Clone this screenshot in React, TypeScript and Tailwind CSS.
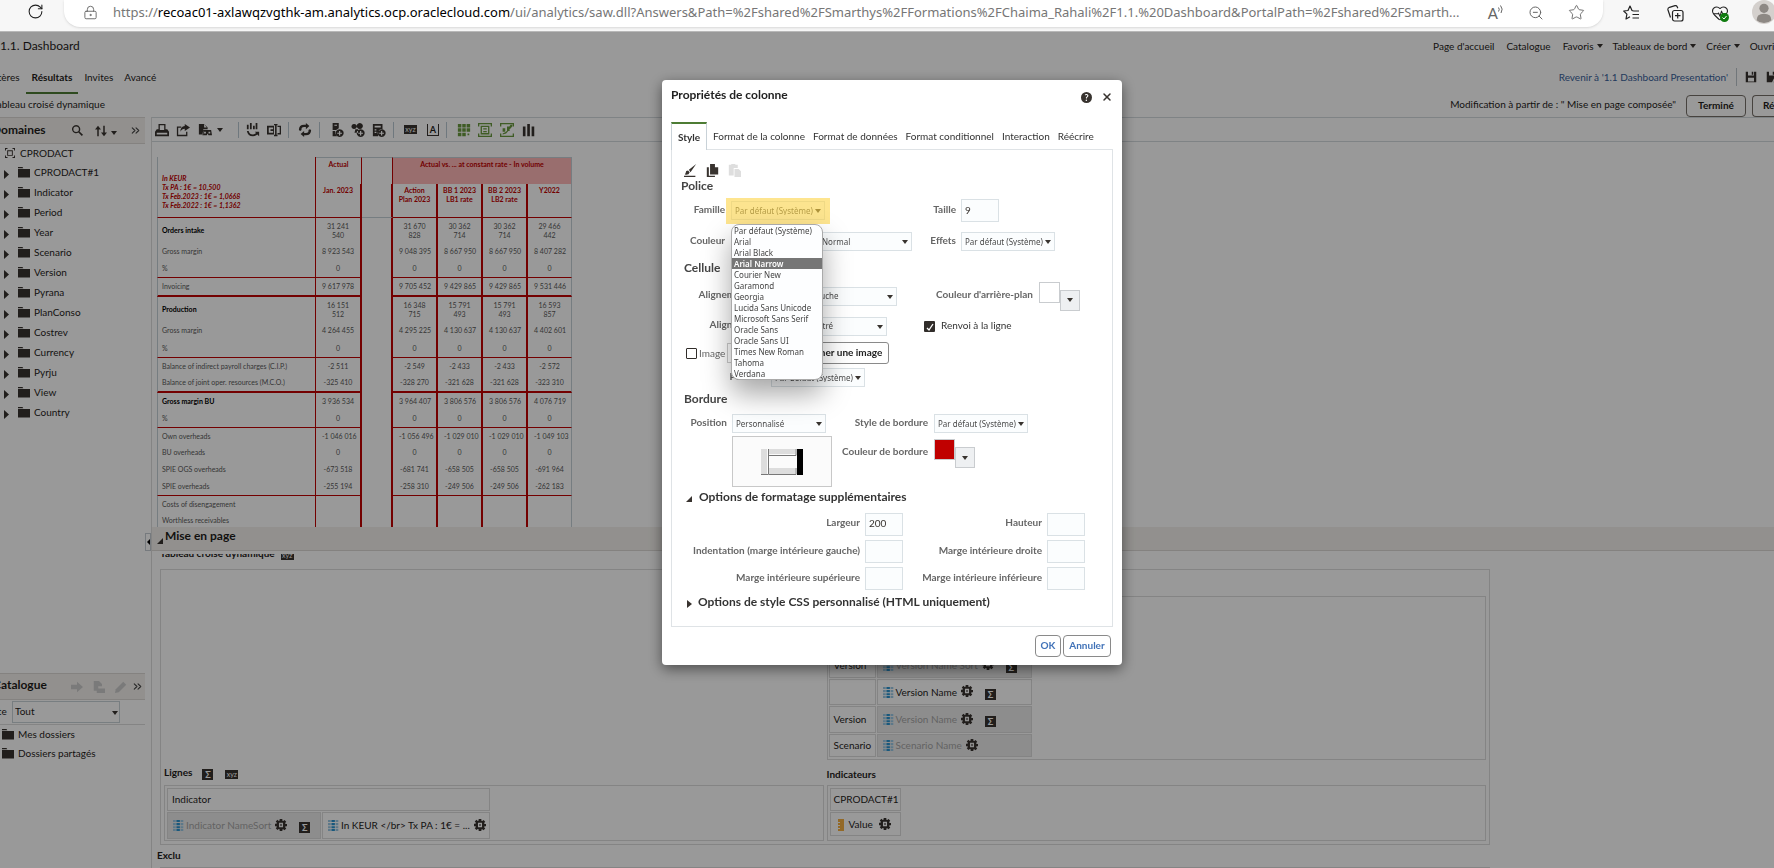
import React from 'react';
import { RotateCw, LockKeyhole, ZoomOut, Star, HeartPulse, ChevronsRight, X } from 'lucide-react';

const INK = '#38332f';

interface IconProps {
    children: React.ReactNode;
    size?: number;
    color?: string;
    className?: string;
}

const Icon: React.FC<IconProps> = ({ children, size = 14, color = INK, className = '' }) => (
    <svg width={size} height={size} viewBox="0 0 16 16" fill={color} stroke="none" className={`shrink-0 ${className}`} aria-hidden="true">
        {children}
    </svg>
);

const Caret = ({ className = '' }: { className?: string }) => (
    <svg width="6" height="4" viewBox="0 0 6 4" fill={INK} className={`shrink-0 ${className}`} aria-hidden="true">
        <path d="M0 0h6L3 4z" />
    </svg>
);

const Folder = () => (
    <svg width="12" height="11" viewBox="0 0 12 11" fill={INK} className="shrink-0" aria-hidden="true">
        <path d="M0 0h4.500l.8 1.300H0zM0 2h12v8.500H0z" />
    </svg>
);

const Gear = () => (
    <Icon size={12}>
        <path
            fillRule="evenodd"
            d="M6.200 0h3.600v2.200l1.200.5 1.700-1.400 2.300 2.300-1.500 1.700.5 1.200H16v3.200h-2l-.5 1.200 1.500 1.700-2.300 2.300-1.700-1.400-1.200.5V16H6.200v-2.200L5 13.300l-1.700 1.400L1 12.400l1.500-1.700L2 9.500H0V6.300h2l.5-1.200L1 3.400l2.300-2.300L5 2.500l1.200-.5zM5.300 5v6h5.400V5zM7 7h2v2H7z"
        />
    </Icon>
);

const Sigma = () => (
    <span className="flex h-[11px] w-[11px] shrink-0 items-center justify-center bg-[#38332f] text-[9px] leading-none font-bold text-white">Σ</span>
);

const Xyz = () => (
    <span className="flex h-[9px] w-[13px] shrink-0 items-center justify-center bg-[#38332f] text-[7px] leading-none text-white">xyz</span>
);

const AttributeIcon = () => (
    <Icon size={11}>
        <path fill="#9cc9e4" d="M0 0h4v3H0zM0 4.500h4v3H0zM0 9h4v3H0zM0 13h4v3H0zM11 0h4v3h-4zM11 4.500h4v3h-4zM11 9h4v3h-4zM11 13h4v3h-4z" />
        <path fill="#2a93cf" d="M5 0h5v3H5zM5 4.500h5v3H5zM5 9h5v3H5zM5 13h5v3H5z" />
    </Icon>
);

const BrowserBar = () => (
    <header className="flex h-8 shrink-0 items-start overflow-hidden border-b border-[#b8b8b8] bg-[#f7f7f7]">
        <button aria-label="Actualiser" className="ml-[27px] pt-[3px] text-[#202020]">
            <RotateCw size={17} strokeWidth={1.500} />
        </button>
        <div className="ml-5 flex h-[27px] min-w-0 flex-1 items-center rounded-b-2xl bg-white pr-[18px] pb-0.5 pl-[19px] shadow-sm">
            <LockKeyhole size={15} strokeWidth={1.500} className="shrink-0 text-[#666]" />
            <a href="#url" className="ml-[15px] min-w-0 flex-1 font-['Noto_Sans',sans-serif] text-[13px] whitespace-nowrap text-[#767676]">
                https://<span className="text-black">recoac01-axlawqzvgthk-am.analytics.ocp.oraclecloud.com</span>
                /ui/analytics/saw.dll?Answers&amp;Path=%2Fshared%2FSmarthys%2FFormations%2FChaima_Rahali%2F1.1.%20Dashboard&amp;PortalPath=%2Fshared%2FSmarth...
            </a>
            <div className="flex shrink-0 items-center gap-6 pl-2 text-[#666]">
                <button aria-label="Lecture à voix haute" className="flex items-start">
                    <span className="text-[15px] leading-4">A</span>
                    <svg width="6" height="9" viewBox="0 0 6 9" fill="none" stroke="currentColor"><path d="M.5 2.500q1.500 2 0 4M2.500.5q3 3.500.5 7.500" /></svg>
                </button>
                <button aria-label="Zoom arrière"><ZoomOut size={16} strokeWidth={1.500} /></button>
                <button aria-label="Ajouter aux favoris"><Star size={17} strokeWidth={1.300} /></button>
            </div>
        </div>
        <div className="flex shrink-0 items-center gap-[27px] pl-5 text-[#222]">
            <button aria-label="Favoris" className="pt-0.5">
                <svg width="17" height="17" viewBox="0 0 17 17" fill="none" stroke="currentColor" strokeWidth="1.200">
                    <path d="M10.500 6 9 5.500 7 1 5 5.500.7 6l3.200 3.200L3 14l4-2.200M10.500 6H16M9.500 9.500H16M9.500 13H16" strokeLinejoin="round" />
                </svg>
            </button>
            <button aria-label="Collections" className="pt-0.5">
                <svg width="17" height="17" viewBox="0 0 17 17" fill="none" stroke="currentColor" strokeWidth="1.200">
                    <rect x="5.500" y="5.500" width="10.500" height="10.500" rx="2" />
                    <path d="M10.700 8v5.500M8 10.700h5.500M3.500 12.500 1 5q-.5-2 1.500-2.700L8 .7q1.500-.4 2.200 1l.6 1.500" />
                </svg>
            </button>
            <button aria-label="Performances" className="relative pt-0.5">
                <HeartPulse size={18} strokeWidth={1.400} />
                <svg width="9" height="9" viewBox="0 0 9 9" className="absolute right-0 bottom-0"><circle cx="4.500" cy="4.500" r="4.500" fill="#107c10" /><path d="m2.500 4.500 1.500 1.500 2.500-3" stroke="white" fill="none" /></svg>
            </button>
            <button aria-label="Profil" className="-mr-0.5 -ml-1">
                <svg width="24" height="24" viewBox="0 0 26 26"><circle cx="13" cy="13" r="13" fill="#d4d0cd" /><circle cx="13" cy="9" r="5" fill="#8d8884" /><path d="M5 22q0-7 8-7t8 7q-3 3-8 3t-8-3" fill="#8d8884" /></svg>
            </button>
        </div>
    </header>
);

const PageHeader = () => (
    <div className="flex h-[85px] shrink-0 justify-between overflow-hidden">
        <div className="shrink-0">
            <h1 className="h-[30px] text-[12px] leading-7">1.1. Dashboard</h1>
            <nav className="-ml-[15px] flex h-8 items-end text-[10px]">
                <a href="#criteres" className="pb-[9px]">Critères</a>
                <a href="#resultats" className="ml-1.5 border-b-2 border-[#4d7c34] px-1.5 pb-[7px] font-bold">Résultats</a>
                <a href="#invites" className="ml-1.5 pb-[9px]">Invites</a>
                <a href="#avance" className="ml-[11px] pb-[9px]">Avancé</a>
            </nav>
            <p className="-ml-2 text-[10px] leading-5">Tableau croisé dynamique</p>
        </div>
        <div className="-mr-1 shrink-0 text-[10px]">
            <nav className="flex h-7 items-center justify-end">
                <a href="#accueil">Page d'accueil</a>
                <a href="#catalogue" className="ml-3">Catalogue</a>
                <button className="ml-3 flex items-center gap-[3px]">Favoris <Caret /></button>
                <button className="ml-2.5 flex items-center gap-[3px]">Tableaux de bord <Caret /></button>
                <button className="ml-2.5 flex items-center gap-[3px]">Créer <Caret /></button>
                <button className="ml-2.5">Ouvrir</button>
            </nav>
            <div className="flex h-[34px] items-center justify-end">
                <a href="#revenir" className="text-[#39629b]">Revenir à '1.1 Dashboard Presentation'</a>
                <span className="ml-2 h-[18px] w-px bg-[#bcc5cc]" />
                <button aria-label="Enregistrer" className="ml-2"><Icon size={12}><path d="M1 1h3v5h8V1h3v14H1zM9 1h2v4H9zM4 9v5h8V9z" fillRule="evenodd" /></Icon></button>
                <button aria-label="Enregistrer sous" className="ml-[9px]"><Icon size={12}><path d="M1 1h3v5h8V1h3l-7 14H1zM9 1h2v4H9zM15 7l-5 8h5z" /></Icon></button>
            </div>
            <div className="flex h-[23px] items-center justify-end">
                <span className="pb-0.5">Modification à partir de : " Mise en page composée"</span>
                <button className="ml-2.5 h-[22px] w-[60px] rounded border border-[#77706a] font-bold">Terminé</button>
                <button className="ml-1.5 h-[22px] w-[26px] overflow-hidden rounded-l border border-r-0 border-[#77706a] pl-2.5 text-left font-bold">Rétablir</button>
            </div>
        </div>
    </div>
);

const folders = ['CPRODACT#1', 'Indicator', 'Period', 'Year', 'Scenario', 'Version', 'Pyrana', 'PlanConso', 'Costrev', 'Currency', 'Pyrju', 'View', 'Country'];

const Sidebar = () => (
    <aside className="flex w-[145px] shrink-0 flex-col overflow-hidden">
        <div className="flex h-[27px] shrink-0 items-center border-y border-[#dcd9d6] bg-[#f4f1ed]">
            <h2 className="-ml-2 w-[60px] pb-0.5 text-[12px] font-bold">Domaines</h2>
            <div className="ml-5 flex items-center">
                <button aria-label="Rechercher"><Icon size={11}><path fillRule="evenodd" d="M6 0a6 6 0 1 0 3.300 11l5 5 1.700-1.700-5-5A6 6 0 0 0 6 0m0 2a4 4 0 1 1 0 8 4 4 0 0 1 0-8" /></Icon></button>
                <button aria-label="Trier" className="ml-3 flex items-center gap-1"><Icon size={12}><path d="M3 15V6H0l4-5 4 5H5v9zM11 1v9H8l4 5 4-5h-3V1z" /></Icon><Caret className="mt-1" /></button>
                <button aria-label="Réduire" className="ml-3"><ChevronsRight size={13} color="#444" /></button>
            </div>
        </div>
        <div className="min-h-0 flex-1 overflow-hidden text-[10px]">
            <div className="flex h-[18px] items-center">
                <Icon size={10} className="ml-[5px]"><path fillRule="evenodd" d="M0 0h4v1.500H1.500V4H0zM12 0h4v4h-1.500V1.500H12zM0 12h1.500v2.500H4V16H0zM14.500 12H16v4h-4v-1.500h2.500zM3.500 3.500h9v9h-9zM5 5v6h6V5z" /></Icon>
                <span className="ml-[5px]">CPRODACT</span>
            </div>
            <ul>
                {folders.map((name) => (
                    <li key={name}>
                        <button className="flex h-5 items-center">
                            <svg width="5" height="9" viewBox="0 0 5 9" fill={INK} className="mt-1 ml-1"><path d="M0 0l5 4.500L0 9z" /></svg>
                            <span className="ml-[9px]"><Folder /></span>
                            <span className="ml-1">{name}</span>
                        </button>
                    </li>
                ))}
            </ul>
        </div>
        <div className="h-[195px] shrink-0 text-[10px]">
            <div className="flex h-[27px] items-center border-y border-[#dcd9d6] bg-[#f4f1ed]">
                <h2 className="-ml-[7px] w-[78px] pb-1 text-[12px] font-bold">Catalogue</h2>
                <div className="flex items-center gap-2.5">
                    <Icon size={12} color="#ccc"><path d="M0 5h8V1l8 7-8 7v-4H0z" /></Icon>
                    <Icon size={12} color="#ccc"><path d="M1 0h7l4 4v3H7v6H1zM7 10h9v6H5v-4z" /></Icon>
                    <Icon size={12} color="#ccc"><path d="m0 16 1-5L11 1l4 4L5 15z" /></Icon>
                </div>
                <button aria-label="Réduire le catalogue" className="ml-1"><ChevronsRight size={13} color="#444" /></button>
            </div>
            <div className="flex h-[25px] items-center border-b border-[#dcdcdc]">
                <label htmlFor="liste" className="-ml-3.5 w-[26px] pb-0.5">Liste</label>
                <div className="relative">
                    <select id="liste" className="h-[22px] w-[108px] appearance-none border border-[#c9d2d8] px-0.5 pt-0 pb-0.5 text-[10px]">
                        <option>Tout</option>
                    </select>
                    <Caret className="absolute top-[10px] right-0.5" />
                </div>
            </div>
            <a href="#mes" className="flex h-[18px] items-center gap-1 pl-0.5"><Folder />Mes dossiers</a>
            <a href="#partages" className="flex h-5 items-center gap-1 pl-0.5"><Folder />Dossiers partagés</a>
        </div>
    </aside>
);

const Separator = () => <span className="h-4 w-px bg-[#b9c8d3]" />;

const Toolbar = () => (
    <div className="flex h-[25px] shrink-0 items-center gap-[7px] border-y border-[#d4dade] pl-[3px]">
        <button aria-label="Imprimer"><Icon><path fillRule="evenodd" d="M4 1h8v6h2l2 3v5H0v-5l2-3h2zM5.500 2.500V8h5V2.500zM2 11v2h12v-2z" /></Icon></button>
        <button aria-label="Exporter"><Icon><path d="M1 4h5v1.500H2.500v8h9V10H13v5H1zM10 1l6 4-6 4V6.500Q6.500 6.500 5 10q0-6 5-6.500z" /></Icon></button>
        <button aria-label="Aperçu" className="ml-px flex items-center gap-[5px]"><Icon><path fillRule="evenodd" d="M1 1h6l4 4v2H6v6H1zM7 1v4h3zM6 8h9l1 6h-4l-1-2-1 2H5zM7 10v2h2v-2zm5 0v2h2v-2z" /></Icon><Caret /></button>
        <span className="w-px" />
        <Separator />
        <button aria-label="Permuter"><Icon><path d="M1 2h2v5H1zM4.500 0h2v7h-2zM8 3h2v4H8zM11 0h2v7h-2zM1 9h2q1 4 5 4 2 0 3.500-1.500L10 10h5v5l-2-2q-2 2-5 2-6 0-7-6" /></Icon></button>
        <button aria-label="Renommer"><Icon><path fillRule="evenodd" d="M0 3h8v10H0zM2 5v6h5V9H4V7h3V5zM8 1h4v1.500h-1v11h1V15H8v-1.500h1.200v-11H8zM12 3h4v10h-4v-1.500h2.500v-7H12z" /></Icon></button>
        <Separator />
        <button aria-label="Actualiser les résultats" className="ml-0.5"><Icon><path d="M1 8q0-6 6-6h2V0l4 3.500L9 7V4.500H7Q3.500 4.500 4 8l-1.500 1zM15 8q0 6-6 6H7v2l-4-3.500L7 9v2.500h2q3.500 0 3-3.500l1.500-1z" /></Icon></button>
        <Separator />
        <button aria-label="Nouveau groupe" className="ml-[3px]"><Icon><path fillRule="evenodd" d="M3 0h7v6L7 8H3zM5 2v1h3V2zM3 9h3v3l2 3H3zM11 7a4.500 4.500 0 1 0 .1 0M10.300 9h1.400v2h2v1.400h-2v2h-1.400v-2h-2V11h2z" /></Icon></button>
        <button aria-label="Nouvel élément"><Icon><path fillRule="evenodd" d="M3.500 1a3 3 0 1 0 .1 0M10 0a3.500 3.500 0 1 0 .1 0M5 7h3v4H4zM11 7a4.500 4.500 0 1 0 .1 0M10.300 9h1.400v2h2v1.400h-2v2h-1.400v-2h-2V11h2z" /></Icon></button>
        <button aria-label="Nouvelle mesure calculée"><Icon><path fillRule="evenodd" d="M1 1h11v6L7 9v6H1zM3 3v2h7V3zM3 7v1.500h2V7zm0 3v1.500h2V10zM11 7a4.500 4.500 0 1 0 .1 0M10.300 9h1.400v2h2v1.400h-2v2h-1.400v-2h-2V11h2z" /></Icon></button>
        <Separator />
        <button aria-label="Propriétés" className="ml-[3px]"><Xyz /></button>
        <button aria-label="Importer le format" className="ml-[3px] flex h-[12px] w-[12px] items-center justify-center border-x border-b border-[#38332f] text-[9px] leading-none font-bold">A</button>
        <Separator />
        <button aria-label="Disposition" className="ml-[3px]"><Icon color="#6a9a3e"><path d="M1 1h4v4H1zM6 1h4v4H6zM11 1h4v4h-4zM1 6h4v4H1zM6 6h4v4H6zM11 6h4v4h-4zM1 11h4v4H1zM6 11h4v4H6zM12 12h2v2h-2z" /></Icon></button>
        <button aria-label="Disposition en sections"><Icon color="#6a9a3e"><path fillRule="evenodd" d="M0 0h16v4h-1.500V1.500h-13V4H0zM0 12h1.500v2.500h13V12H16v4H0zM3 3h10v10H3zM4.500 4.500v7h7v-7zM6 6h4v1.500H6zm0 3h4v1.500H6z" /></Icon></button>
        <button aria-label="Disposition en graphique" className="ml-px"><Icon color="#6a9a3e"><path d="M0 0h16v4h-1.500V1.500h-13V4H0zM0 12h1.500v2.500h13V12H16v4H0zM3 6h3v4H3zM8 4h3v5H8zM12 2h2v2l-7 8-4 1v-1l4-2z" /></Icon></button>
        <button aria-label="Graphique" className="ml-px"><Icon><path d="M1 4h3v11H1zM6 1h3v14H6zM11 4h3v11h-3z" /></Icon></button>
    </div>
);

interface PivotRow {
    label: string;
    values: string[];
    height: string;
    rule?: 'thin' | 'thick';
    bold?: boolean;
}

const zeros = ['0', '0', '0', '0', '0'];
const empty = ['', '', '', '', ''];

const rows: PivotRow[] = [
    { label: 'Orders intake', values: ['31 241 540', '31 670 828', '30 362 714', '30 362 714', '29 466 442'], height: 'h-[25px]', bold: true },
    { label: 'Gross margin', values: ['8 923 543', '9 048 395', '8 667 950', '8 667 950', '8 407 282'], height: 'h-[17px]' },
    { label: '%', values: zeros, height: 'h-[18px]', rule: 'thin' },
    { label: 'Invoicing', values: ['9 617 978', '9 705 452', '9 429 865', '9 429 865', '9 531 446'], height: 'h-[19px]', rule: 'thick' },
    { label: 'Production', values: ['16 151 512', '16 348 715', '15 791 493', '15 791 493', '16 593 857'], height: 'h-[25px]', bold: true },
    { label: 'Gross margin', values: ['4 264 455', '4 295 225', '4 130 637', '4 130 637', '4 402 601'], height: 'h-[17px]' },
    { label: '%', values: zeros, height: 'h-[19px]', rule: 'thin' },
    { label: 'Balance of indirect payroll charges (C.I.P.)', values: ['-2 511', '-2 549', '-2 433', '-2 433', '-2 572'], height: 'h-[16px]' },
    { label: 'Balance of joint oper. resources (M.C.O.)', values: ['-325 410', '-328 270', '-321 628', '-321 628', '-323 310'], height: 'h-[19px]', rule: 'thick' },
    { label: 'Gross margin BU', values: ['3 936 534', '3 964 407', '3 806 576', '3 806 576', '4 076 719'], height: 'h-[16px]', bold: true },
    { label: '%', values: zeros, height: 'h-[19px]', rule: 'thin' },
    { label: 'Own overheads', values: ['-1 046 016', '-1 056 496', '-1 029 010', '-1 029 010', '-1 049 103'], height: 'h-[16px]' },
    { label: 'BU overheads', values: zeros, height: 'h-[17px]' },
    { label: 'SPIE OGS overheads', values: ['-673 518', '-681 741', '-658 505', '-658 505', '-691 964'], height: 'h-[16px]' },
    { label: 'SPIE overheads', values: ['-255 194', '-258 310', '-249 506', '-249 506', '-262 183'], height: 'h-[19px]', rule: 'thin' },
    { label: 'Costs of disengagement', values: empty, height: 'h-[16px]' },
    { label: 'Worthless receivables', values: empty, height: 'h-[17px]' },
];

const ruleClass = { thin: 'border-b border-b-[#c00000]', thick: 'border-b-2 border-b-[#c00000]' };

const PivotTable = () => (
    <table className="mt-[15px] ml-[5px] w-[415px] table-fixed border-separate border-spacing-0 text-center text-[7px] leading-[9px] text-[#5a5a5a]">
        <colgroup>
            <col className="w-[159px]" />
            <col className="w-[46px]" />
            <col className="w-[31px]" />
            <col className="w-[45px]" />
            <col className="w-[45px]" />
            <col className="w-[45px]" />
            <col className="w-[44px]" />
        </colgroup>
        <thead className="align-top text-[#c00000]">
            <tr>
                <th rowSpan={2} className="border-r border-b border-b-[#c00000] border-l border-l-[#c5d0d8] border-r-[#c00000] pt-[17px] pl-1 text-left italic">
                    In KEUR<br />Tx PA : 1€ = 10,500<br />Tx Feb.2023 : 1€ = 1,0668<br />Tx Feb.2022 : 1€ = 1,1362
                </th>
                <th className="h-[27px] border-t border-r border-t-[#c5d0d8] border-r-[#c00000] pt-0.5">Actual</th>
                <th className="border-t border-r border-t-[#c5d0d8] border-r-[#c00000]" />
                <th colSpan={4} className="border-t border-r border-[#c5d0d8] bg-[#ffb8b8] pt-0.5">Actual vs. ... at constant rate - In volume</th>
            </tr>
            <tr>
                <th className="h-[34px] border-r-2 border-b border-[#c00000] pt-0.5">Jan. 2023</th>
                <th className="border-r-2 border-b border-r-[#c00000] border-b-[#c5d0d8]" />
                <th className="border-r-2 border-b border-[#c00000] pt-0.5">Action<br />Plan 2023</th>
                <th className="border-r-2 border-b border-[#c00000] pt-0.5">BB 1 2023<br />LB1 rate</th>
                <th className="border-r-2 border-b border-[#c00000] pt-0.5">BB 2 2023<br />LB2 rate</th>
                <th className="border-r border-b border-r-[#c5d0d8] border-b-[#c00000] pt-0.5">Y2022</th>
            </tr>
        </thead>
        <tbody>
            {rows.map((row, i) => {
                const rule = row.rule ? ruleClass[row.rule] : '';
                return (
                    <tr key={i} className={row.height}>
                        <td className={`border-r border-l border-r-[#c00000] border-l-[#c5d0d8] pl-1 text-left ${rule} ${row.bold ? 'font-bold text-black' : ''}`}>{row.label}</td>
                        {row.values.map((value, j) => (
                            <React.Fragment key={j}>
                                {j === 1 && <td className="border-r-2 border-r-[#c00000]" />}
                                <td className={`px-1.5 ${value.length < 10 || value[0] === '-' ? 'whitespace-nowrap' : ''} ${j === 4 ? 'border-r border-r-[#c5d0d8]' : 'border-r-2 border-r-[#c00000]'} ${rule}`}>
                                    {value}
                                </td>
                            </React.Fragment>
                        ))}
                    </tr>
                );
            })}
        </tbody>
    </table>
);

interface LayoutCellProps {
    name: string;
    muted?: boolean;
    sigma?: boolean;
    className?: string;
}

const LayoutCell: React.FC<LayoutCellProps> = ({ name, muted = false, sigma = false, className = '' }) => (
    <div className={`flex items-center border border-[#dcdcdc] pl-[5px] ${muted ? 'bg-[#ececec] text-[#a5a5a5]' : ''} ${className}`}>
        <AttributeIcon />
        <span className="mr-1 ml-0.5 whitespace-nowrap">{name}</span>
        <button aria-label={`Options ${name}`} className="pb-0.5"><Gear /></button>
        {sigma && <span className="mt-1 ml-3"><Sigma /></span>}
    </div>
);

const columnRows = [
    { area: 'Version', name: 'Version Name Sort', muted: true, sigma: true, height: 'h-[26px]' },
    { area: '', name: 'Version Name', muted: false, sigma: true, height: 'h-[26px]' },
    { area: 'Version', name: 'Version Name', muted: true, sigma: true, height: 'h-[27px]' },
    { area: 'Scenario', name: 'Scenario Name', muted: true, sigma: false, height: 'h-[23px]' },
];

const LayoutPanel = () => (
    <div className="mt-[3px] min-h-0 flex-1 overflow-hidden text-[10px]">
        <div className="flex h-[15px] items-start">
            <h3 className="-mt-[7px] ml-2 leading-[12px] font-bold">Tableau croisé dynamique</h3>
            <span className="-mt-[3px] ml-1.5"><Xyz /></span>
        </div>
        <div className="ml-2 flex h-[276px] w-[82%] border border-[#dcdcdc] p-[3px]">
            <div className="flex min-w-0 flex-1 flex-col justify-end">
                <div className="flex h-[26px] items-center">
                    <h3 className="font-bold">Lignes</h3>
                    <span className="mt-1 ml-2.5"><Sigma /></span>
                    <span className="mt-1 ml-3"><Xyz /></span>
                </div>
                <div className="h-[56px] border border-[#dcdcdc] p-0.5">
                    <div className="flex h-[23px] w-[323px] items-center border border-[#dcdcdc] pl-1">Indicator</div>
                    <div className="mt-px flex w-[323px]">
                        <LayoutCell name="Indicator NameSort" muted sigma className="h-[27px] w-[154px]" />
                        <LayoutCell name="In KEUR </br> Tx PA : 1€ = ..." className="ml-px h-[27px] flex-1" />
                    </div>
                </div>
            </div>
            <div className="ml-[3px] flex min-w-0 flex-1 flex-col">
                <h3 className="h-[23px] shrink-0 font-bold">Colonnes</h3>
                <div className="flex flex-1 flex-col justify-end gap-px border border-[#dcdcdc] p-px pb-0.5">
                    {columnRows.map((row, i) => (
                        <div key={i} className={`flex gap-px ${row.height}`}>
                            <div className="flex w-[47px] items-center border border-[#dcdcdc] pl-1">{row.area}</div>
                            <LayoutCell name={row.name} muted={row.muted} sigma={row.sigma} className="w-[155px]" />
                        </div>
                    ))}
                </div>
                <h3 className="flex h-[25px] items-center pt-1 font-bold">Indicateurs</h3>
                <div className="h-[56px] shrink-0 border border-[#dcdcdc] p-0.5">
                    <div className="flex h-[23px] w-[71px] items-center border border-[#dcdcdc] pl-[3px]">CPRODACT#1</div>
                    <div className="mt-px flex h-6 w-[71px] items-center border border-[#dcdcdc] pl-[7px]">
                        <svg width="6" height="12" viewBox="0 0 6 12" className="mt-0.5"><path fill="#f5b041" d="M0 0h6v12H0v-2h2V9H0V7h2V6H0V4h2V3H0z" /></svg>
                        <span className="mr-1.5 ml-[5px]">Value</span>
                        <button aria-label="Options Value"><Gear /></button>
                    </div>
                </div>
            </div>
        </div>
        <h3 className="ml-[5px] flex h-[22px] items-center pb-0.5 font-bold">Exclu</h3>
        <div className="ml-2 h-10 w-[82%] border border-[#dcdcdc]" />
    </div>
);

interface SelectBoxProps {
    id: string;
    value: string;
    label?: string;
    className?: string;
}

const SelectBox: React.FC<SelectBoxProps> = ({ id, value, label, className = 'w-[94px]' }) => (
    <span className={`relative block shrink-0 ${className}`}>
        <select id={id} aria-label={label} className="block h-[19px] w-full appearance-none border border-[#dae1e5] bg-[#fbfdfe] py-0 pr-0 pl-[3px] font-['Noto_Sans',sans-serif] text-[8px] leading-none font-normal text-[#4a4a4a]">
            <option>{value}</option>
        </select>
        <Caret className="pointer-events-none absolute top-2 right-1" />
    </span>
);

const ColorPicker = ({ label, color }: { label: string; color: string }) => (
    <span className="flex items-start">
        <span className={`h-[21px] w-[21px] border border-[#c9cccf] ${color}`} />
        <button aria-label={label} className="mt-2 flex h-[21px] w-5 items-center justify-center border border-[#c9cccf] bg-[#eef0f2]"><Caret /></button>
    </span>
);

const FieldLabel = ({ htmlFor, width, children }: { htmlFor: string; width: string; children: React.ReactNode }) => (
    <label htmlFor={htmlFor} className={`shrink-0 pb-[3px] text-right whitespace-nowrap ${width}`}>{children}</label>
);

const SmallInput = ({ id, value = '' }: { id: string; value?: string }) => (
    <input id={id} defaultValue={value} className="ml-[5px] h-[23px] w-[38px] shrink-0 border border-[#dae1e5] bg-[#fbfdfe] px-[3px] pb-0.5 text-[10px] font-normal text-[#38332f]" />
);

const fonts = [
    'Par défaut (Système)', 'Arial', 'Arial Black', 'Arial Narrow', 'Courier New', 'Garamond', 'Georgia',
    'Lucida Sans Unicode', 'Microsoft Sans Serif', 'Oracle Sans', 'Oracle Sans UI', 'Times New Roman', 'Tahoma', 'Verdana',
];

const FontList = () => (
    <ul role="listbox" aria-label="Familles de police" className="absolute top-[23px] left-0 z-10 w-[92px] overflow-hidden rounded-lg border border-[#aaa] bg-[#fdfeff] font-['Noto_Sans',sans-serif] text-[8px] leading-[11px] font-normal text-[#444] shadow-[0_14px_28px_rgba(0,0,0,0.35)]">
        {fonts.map((font) => (
            <li key={font} role="option" aria-selected={font === 'Arial Narrow'} className={`h-[11px] pl-0.5 whitespace-nowrap ${font === 'Arial Narrow' ? 'bg-[#767676] font-semibold text-white' : ''}`}>
                {font}
            </li>
        ))}
    </ul>
);

const tabs = ['Format de la colonne', 'Format de données', 'Format conditionnel', 'Interaction', 'Réécrire'];

const StylePanel = () => (
    <div className="border border-t-0 border-[#dfe3e6] pt-3 pb-3 text-[10px] font-bold text-[#666]">
        <div className="flex h-4 items-center gap-[9px] pl-3">
            <button aria-label="Effacer le format"><Icon size={13}><path d="M15 0 6 7l2 3zM5 8q-3 0-3 3l-1 2q5 1 6-3zM0 14.500h14V16H0z" /></Icon></button>
            <button aria-label="Copier le format"><Icon size={13}><path d="M5 0h6l4 4v9H5zM11 0v4h4zM1 4h2.500v10.500H11V16H1z" /></Icon></button>
            <button aria-label="Coller le format"><Icon size={13} color="#dedede"><path d="M1 1h3V0h5v1h3v4H7v9H1zM8 6h5l3 3v7H8z" /></Icon></button>
        </div>
        <h3 className="flex h-[17px] items-center pb-0.5 pl-[9px] text-[12px] text-[#444]">Police</h3>
        <div className="flex h-[31px] items-center">
            <FieldLabel htmlFor="famille" width="w-[53px]">Famille</FieldLabel>
            <div className="relative ml-1.5">
                <SelectBox id="famille" value="Par défaut (Système)" />
                <div className="pointer-events-none absolute -inset-x-[5px] -top-[3px] -bottom-1 bg-[#fed444]/60" />
                <FontList />
            </div>
            <FieldLabel htmlFor="taille" width="w-[131px]">Taille</FieldLabel>
            <SmallInput id="taille" value="9" />
        </div>
        <div className="flex h-[31px] items-center">
            <FieldLabel htmlFor="couleur" width="w-[53px]">Couleur</FieldLabel>
            <span id="couleur" className="ml-1.5 w-[87px]" />
            <SelectBox id="style-police" label="Style de police" value="Normal" />
            <FieldLabel htmlFor="effets" width="w-11">Effets</FieldLabel>
            <SelectBox id="effets" value="Par défaut (Système)" className="ml-[5px] w-[94px]" />
        </div>
        <h3 className="flex h-[23px] items-center pb-0.5 pl-3 text-[12px] text-[#444]">Cellule</h3>
        <div className="flex h-8 items-center">
            <FieldLabel htmlFor="align-h" width="w-[125px]">Alignement horizontal</FieldLabel>
            <SelectBox id="align-h" value="Gauche" className="ml-[9px] w-[91px]" />
            <FieldLabel htmlFor="arriere-plan" width="w-[136px]">Couleur d'arrière-plan</FieldLabel>
            <span id="arriere-plan" className="ml-1.5"><ColorPicker label="Choisir la couleur d'arrière-plan" color="bg-white" /></span>
        </div>
        <div className="flex h-7 items-center">
            <FieldLabel htmlFor="align-v" width="w-[124px]">Alignement vertical</FieldLabel>
            <SelectBox id="align-v" value="Centré" className="ml-2 w-[83px]" />
            <label className="relative ml-[37px] flex items-center gap-1.5 font-normal text-[#333]">
                <input type="checkbox" defaultChecked className="h-[11px] w-[11px] appearance-none rounded-[1px] bg-[#312d2a]" />
                <svg width="11" height="11" viewBox="0 0 11 11" fill="none" stroke="white" strokeWidth="1.300" className="pointer-events-none absolute left-0"><path d="m3 7 2 2 4-6" /></svg>
                <span className="pb-0.5">Renvoi à la ligne</span>
            </label>
        </div>
        <div className="flex h-[26px] items-center">
            <label className="ml-[14px] flex items-center gap-0.5 font-normal">
                <input type="checkbox" className="h-[11px] w-[11px] appearance-none rounded-[1px] border border-[#312d2a]" />
                Image
            </label>
            <input aria-label="Chemin de l'image" className="ml-0.5 h-5 w-[38px] border border-[#ccc]" />
            <button className="ml-1.5 h-[22px] w-[118px] rounded-[3px] border border-[#8a8a8a] pr-1.5 pb-0.5 text-right whitespace-nowrap text-[#222]">Sélectionner une image</button>
        </div>
        <div className="flex h-[23px] items-center">
            <FieldLabel htmlFor="position-image" width="w-[94px]">Position</FieldLabel>
            <SelectBox id="position-image" value="Par défaut (Système)" className="ml-[5px] w-[94px]" />
        </div>
        <h3 className="flex h-[22px] items-center pb-0.5 pl-3 text-[12px] text-[#444]">Bordure</h3>
        <div className="flex h-[25px] items-center">
            <FieldLabel htmlFor="position" width="w-[55px]">Position</FieldLabel>
            <SelectBox id="position" value="Personnalisé" className="ml-[5px] w-[94px]" />
            <FieldLabel htmlFor="style-bordure" width="w-[102px]">Style de bordure</FieldLabel>
            <SelectBox id="style-bordure" value="Par défaut (Système)" className="ml-1.5 w-[94px]" />
        </div>
        <div className="flex h-[51px] items-start">
            <div className="ml-[60px] flex h-[51px] w-[100px] items-center justify-center border border-[#c8c8c8] bg-[#fbfbfb]">
                <svg width="42" height="26" viewBox="0 0 42 26">
                    <path fill="#ddd" d="M0 0h6v26H0zM8 0h26v5H8zM8 19h26v6H8z" />
                    <path fill="none" stroke="#777" d="M0 25.500h7.500V0M8 6.500h27V0M8 25.500h27V19" />
                    <path d="M36 0h6v26h-6z" />
                </svg>
            </div>
            <div className="flex items-start pt-[3px]">
                <span className="pt-[5px]"><FieldLabel htmlFor="couleur-bordure" width="inline-block w-24">Couleur de bordure</FieldLabel></span>
                <span id="couleur-bordure" className="ml-1.5"><ColorPicker label="Choisir la couleur de bordure" color="bg-[#c00000]" /></span>
            </div>
        </div>
        <button className="flex h-[23px] items-center gap-[7px] pb-1 pl-[14px] text-[12px] text-[#333]">
            <svg width="6" height="6" viewBox="0 0 6 6" fill={INK} className="mt-1"><path d="M6 0v6H0z" /></svg>
            Options de formatage supplémentaires
        </button>
        <div className="flex h-7 items-center">
            <FieldLabel htmlFor="largeur" width="w-[188px]">Largeur</FieldLabel>
            <SmallInput id="largeur" value="200" />
            <FieldLabel htmlFor="hauteur" width="w-[139px]">Hauteur</FieldLabel>
            <SmallInput id="hauteur" />
        </div>
        <div className="flex h-[27px] items-center">
            <FieldLabel htmlFor="marge-gauche" width="w-[188px]">Indentation (marge intérieure gauche)</FieldLabel>
            <SmallInput id="marge-gauche" />
            <FieldLabel htmlFor="marge-droite" width="w-[139px]">Marge intérieure droite</FieldLabel>
            <SmallInput id="marge-droite" />
        </div>
        <div className="flex h-[27px] items-center">
            <FieldLabel htmlFor="marge-sup" width="w-[188px]">Marge intérieure supérieure</FieldLabel>
            <SmallInput id="marge-sup" />
            <FieldLabel htmlFor="marge-inf" width="w-[139px]">Marge intérieure inférieure</FieldLabel>
            <SmallInput id="marge-inf" />
        </div>
        <button className="flex h-[22px] items-center gap-1.5 pb-0.5 pl-[15px] text-[12px] text-[#333]">
            <svg width="5" height="8" viewBox="0 0 5 8" fill={INK} className="mt-1"><path d="M0 0l5 4-5 4z" /></svg>
            Options de style CSS personnalisé (HTML uniquement)
        </button>
    </div>
);

const ColumnPropertiesDialog = () => (
    <div role="dialog" aria-label="Propriétés de colonne" className="h-fit w-[460px] rounded bg-white px-[9px] pb-2 shadow-[0_4px_14px_rgba(0,0,0,0.5)]">
        <div className="flex h-[42px] items-start justify-between pt-[7px]">
            <h2 className="text-[12px] leading-[15px] font-bold text-[#222]">Propriétés de colonne</h2>
            <div className="flex items-center gap-[9px] pt-1">
                <button aria-label="Aide" className="flex h-[11px] w-[11px] items-center justify-center rounded-full bg-[#38332f] text-[9px] leading-none font-bold text-white">?</button>
                <button aria-label="Fermer"><X size={12} strokeWidth={3} color={INK} /></button>
            </div>
        </div>
        <div role="tablist" className="flex h-7 items-stretch text-[10px] text-[#333]">
            <button role="tab" aria-selected="true" className="w-9 shrink-0 border-x border-t-2 border-x-[#c9d2d8] border-t-[#4d7c34] font-bold">Style</button>
            <div className="flex flex-1 items-center gap-2 border-b border-[#dfe3e6] pt-0.5 pl-1.5">
                {tabs.map((tab) => (
                    <button key={tab} role="tab" aria-selected="false" className="whitespace-nowrap">{tab}</button>
                ))}
            </div>
        </div>
        <StylePanel />
        <div className="flex justify-end gap-0.5 pt-2 pr-0.5 text-[10px] font-bold text-[#4273b8]">
            <button className="h-[22px] w-[26px] rounded border border-[#8a8a8a] pb-0.5">OK</button>
            <button className="h-[22px] w-12 rounded border border-[#8a8a8a] pb-0.5">Annuler</button>
        </div>
    </div>
);

const App: React.FC = () => {
    return (
        <div className="flex h-screen flex-col overflow-hidden bg-white font-[Lato,sans-serif] text-[#1f1d1b]">
            <BrowserBar />
            <PageHeader />
            <div className="flex min-h-0 flex-1">
                <Sidebar />
                <div className="flex w-1.5 shrink-0 flex-col">
                    <button aria-label="Masquer le volet" className="mt-[416px] flex h-[18px] items-center justify-end border border-[#c5ccd2]">
                        <svg width="3" height="6" viewBox="0 0 3 6"><path d="M3 0v6L0 3z" /></svg>
                    </button>
                </div>
                <main className="flex min-w-0 flex-1 flex-col border-l border-[#dcdcdc]">
                    <Toolbar />
                    <div className="h-[385px] shrink-0 overflow-hidden">
                        <PivotTable />
                    </div>
                    <div className="flex h-6 shrink-0 items-center gap-0.5 border-b border-[#dcd9d6] bg-[#f4f1ed] pl-[5px]">
                        <svg width="6" height="6" viewBox="0 0 6 6" fill={INK} className="mt-1"><path d="M6 0v6H0z" /></svg>
                        <h2 className="pb-1.5 text-[12px] font-bold">Mise en page</h2>
                    </div>
                    <LayoutPanel />
                </main>
            </div>
            <div className="fixed inset-x-0 top-8 bottom-0 flex justify-center bg-black/40 pt-12 pl-2.5">
                <ColumnPropertiesDialog />
            </div>
        </div>
    );
};

export default App;
